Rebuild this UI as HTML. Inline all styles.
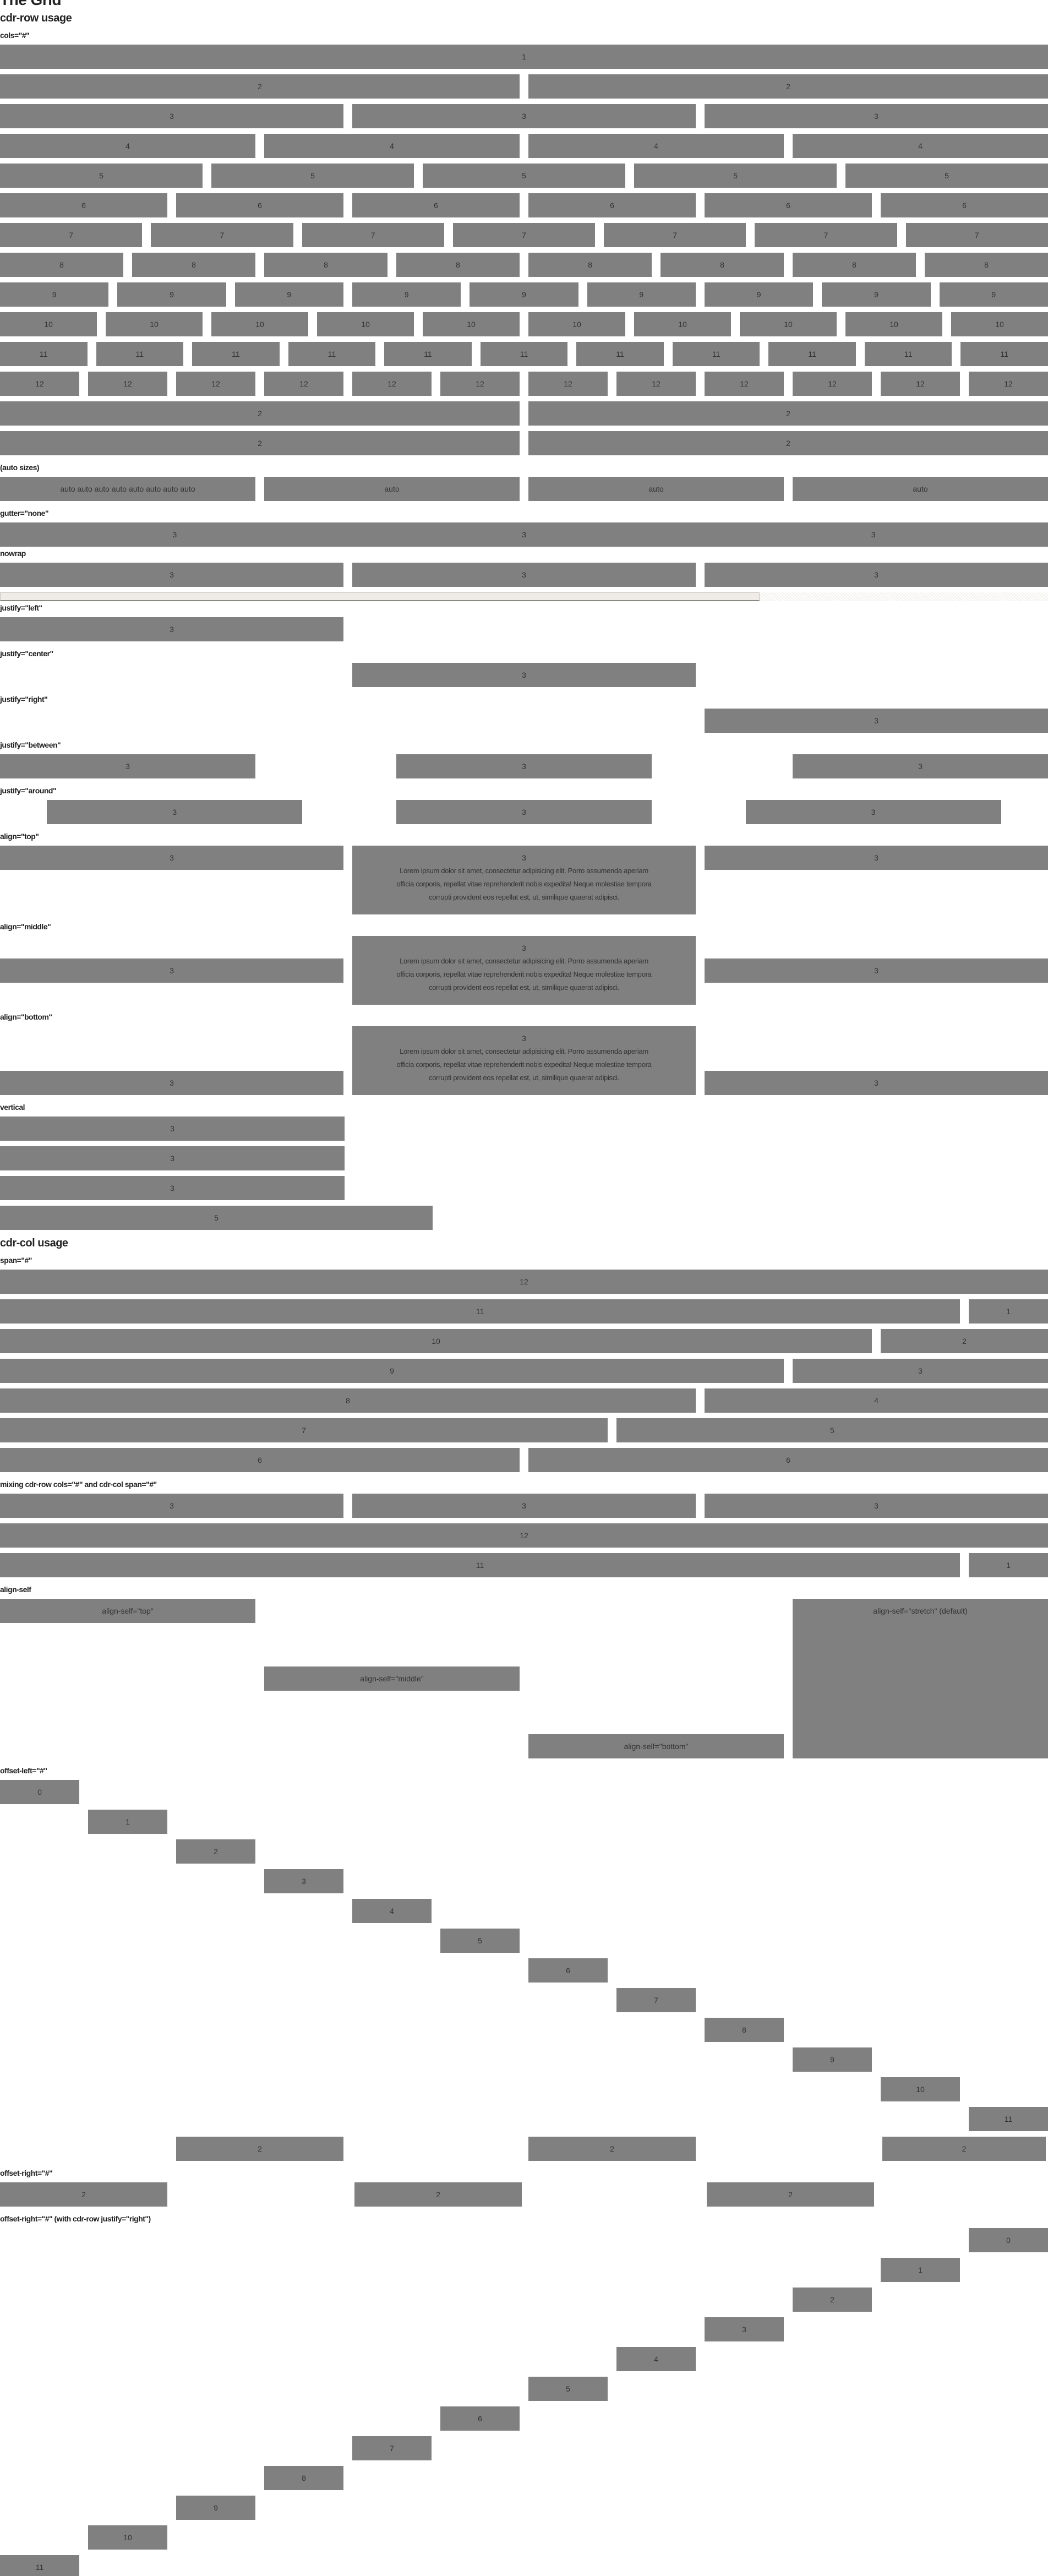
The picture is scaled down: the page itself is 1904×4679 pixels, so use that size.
<!DOCTYPE html>
<html><head><meta charset="utf-8">
<style>
*{box-sizing:border-box;margin:0;padding:0}
html,body{width:1904px;height:4679px;overflow:hidden;background:#fff}
body{font-family:"Liberation Sans",sans-serif;color:#222;position:relative}
.hdr{position:relative;height:52px}
.h1{position:absolute;left:0;top:-16px;font-size:28px;font-weight:bold;line-height:32px;letter-spacing:-0.5px}
.h2{font-size:20px;font-weight:bold;line-height:24px;letter-spacing:-0.5px}
.lab{height:29px;line-height:24px;font-size:14px;font-weight:bold;letter-spacing:-0.5px}
.row{display:flex;margin-bottom:10px;gap:16px}
.row.ng{gap:0;margin-bottom:0}
.b{height:44px;line-height:44px;background:#808080;color:#333;text-align:center;font-size:14px;flex:0 0 auto}
.f{flex:1 1 0}
.tall{height:125px;line-height:24px;padding-top:10px}
.tall div{font-size:13px;white-space:nowrap;letter-spacing:-0.3px}
.scroll{height:16px;margin-bottom:0;background:repeating-linear-gradient(45deg,#f4f2ee 0 2px,#fff 2px 4px);position:relative}
.scroll div{position:absolute;left:0;top:0;width:1380px;height:16px;background:#efebe6;border:1px solid #c8c4bd;border-bottom:2px solid #8a8680}
</style></head><body>
<div class="hdr"><div class="h1">The Grid</div><div class="h2" style="position:absolute;top:21px;left:0">cdr-row usage</div></div>
<div class="lab">cols="#"</div>
<div class="row"><div class="b f">1</div></div>
<div class="row"><div class="b f">2</div><div class="b f">2</div></div>
<div class="row"><div class="b f">3</div><div class="b f">3</div><div class="b f">3</div></div>
<div class="row"><div class="b f">4</div><div class="b f">4</div><div class="b f">4</div><div class="b f">4</div></div>
<div class="row"><div class="b f">5</div><div class="b f">5</div><div class="b f">5</div><div class="b f">5</div><div class="b f">5</div></div>
<div class="row"><div class="b f">6</div><div class="b f">6</div><div class="b f">6</div><div class="b f">6</div><div class="b f">6</div><div class="b f">6</div></div>
<div class="row"><div class="b f">7</div><div class="b f">7</div><div class="b f">7</div><div class="b f">7</div><div class="b f">7</div><div class="b f">7</div><div class="b f">7</div></div>
<div class="row"><div class="b f">8</div><div class="b f">8</div><div class="b f">8</div><div class="b f">8</div><div class="b f">8</div><div class="b f">8</div><div class="b f">8</div><div class="b f">8</div></div>
<div class="row"><div class="b f">9</div><div class="b f">9</div><div class="b f">9</div><div class="b f">9</div><div class="b f">9</div><div class="b f">9</div><div class="b f">9</div><div class="b f">9</div><div class="b f">9</div></div>
<div class="row"><div class="b f">10</div><div class="b f">10</div><div class="b f">10</div><div class="b f">10</div><div class="b f">10</div><div class="b f">10</div><div class="b f">10</div><div class="b f">10</div><div class="b f">10</div><div class="b f">10</div></div>
<div class="row"><div class="b f">11</div><div class="b f">11</div><div class="b f">11</div><div class="b f">11</div><div class="b f">11</div><div class="b f">11</div><div class="b f">11</div><div class="b f">11</div><div class="b f">11</div><div class="b f">11</div><div class="b f">11</div></div>
<div class="row"><div class="b f">12</div><div class="b f">12</div><div class="b f">12</div><div class="b f">12</div><div class="b f">12</div><div class="b f">12</div><div class="b f">12</div><div class="b f">12</div><div class="b f">12</div><div class="b f">12</div><div class="b f">12</div><div class="b f">12</div></div>
<div class="row"><div class="b f">2</div><div class="b f">2</div></div>
<div class="row"><div class="b f">2</div><div class="b f">2</div></div>
<div class="lab">(auto sizes)</div>
<div class="row"><div class="b f">auto auto auto auto auto auto auto auto</div><div class="b f">auto</div><div class="b f">auto</div><div class="b f">auto</div></div>
<div class="lab">gutter="none"</div>
<div class="row ng"><div class="b f">3</div><div class="b f">3</div><div class="b f">3</div></div>
<div class="lab" style="margin-top:0">nowrap</div>
<div class="row"><div class="b f">3</div><div class="b f">3</div><div class="b f">3</div></div>
<div class="scroll"><div></div></div>
<div class="lab">justify="left"</div>
<div class="row"><div class="b" style="width:624px">3</div></div>
<div class="lab">justify="center"</div>
<div class="row" style="justify-content:center"><div class="b" style="width:624px">3</div></div>
<div class="lab">justify="right"</div>
<div class="row" style="justify-content:flex-end"><div class="b" style="width:624px">3</div></div>
<div class="lab">justify="between"</div>
<div class="row" style="justify-content:space-between;gap:0"><div class="b" style="width:464px">3</div><div class="b" style="width:464px">3</div><div class="b" style="width:464px">3</div></div>
<div class="lab">justify="around"</div>
<div class="row" style="justify-content:space-around;gap:0"><div class="b" style="width:464px">3</div><div class="b" style="width:464px">3</div><div class="b" style="width:464px">3</div></div>
<div class="lab">align="top"</div>
<div class="row" style="align-items:flex-start"><div class="b f">3</div><div class="b f tall">3<div>Lorem ipsum dolor sit amet, consectetur adipisicing elit. Porro assumenda aperiam<br>officia corporis, repellat vitae reprehenderit nobis expedita! Neque molestiae tempora<br>corrupti provident eos repellat est, ut, similique quaerat adipisci.</div></div><div class="b f">3</div></div>
<div class="lab">align="middle"</div>
<div class="row" style="align-items:center"><div class="b f">3</div><div class="b f tall">3<div>Lorem ipsum dolor sit amet, consectetur adipisicing elit. Porro assumenda aperiam<br>officia corporis, repellat vitae reprehenderit nobis expedita! Neque molestiae tempora<br>corrupti provident eos repellat est, ut, similique quaerat adipisci.</div></div><div class="b f">3</div></div>
<div class="lab">align="bottom"</div>
<div class="row" style="align-items:flex-end"><div class="b f">3</div><div class="b f tall">3<div>Lorem ipsum dolor sit amet, consectetur adipisicing elit. Porro assumenda aperiam<br>officia corporis, repellat vitae reprehenderit nobis expedita! Neque molestiae tempora<br>corrupti provident eos repellat est, ut, similique quaerat adipisci.</div></div><div class="b f">3</div></div>
<div class="lab">vertical</div>
<div class="row"><div class="b" style="width:626px">3</div></div>
<div class="row"><div class="b" style="width:626px">3</div></div>
<div class="row"><div class="b" style="width:626px">3</div></div>
<div class="row"><div class="b" style="width:786px">5</div></div>
<div class="h2" style="height:33px;line-height:28px">cdr-col usage</div>
<div class="lab">span="#"</div>
<div class="row"><div class="b f">12</div></div>
<div class="row"><div class="b" style="width:1744px">11</div><div class="b f">1</div></div>
<div class="row"><div class="b" style="width:1584px">10</div><div class="b f">2</div></div>
<div class="row"><div class="b" style="width:1424px">9</div><div class="b f">3</div></div>
<div class="row"><div class="b" style="width:1264px">8</div><div class="b f">4</div></div>
<div class="row"><div class="b" style="width:1104px">7</div><div class="b f">5</div></div>
<div class="row"><div class="b f">6</div><div class="b f">6</div></div>
<div class="lab">mixing cdr-row cols="#" and cdr-col span="#"</div>
<div class="row"><div class="b f">3</div><div class="b f">3</div><div class="b f">3</div></div>
<div class="row"><div class="b f">12</div></div>
<div class="row"><div class="b" style="width:1744px">11</div><div class="b f">1</div></div>
<div class="lab">align-self</div>
<div class="row" style="height:290px"><div class="b" style="width:464px;align-self:flex-start">align-self="top"</div><div class="b" style="width:464px;align-self:center">align-self="middle"</div><div class="b" style="width:464px;align-self:flex-end">align-self="bottom"</div><div class="b" style="width:464px;height:290px">align-self="stretch" (default)</div></div>
<div class="lab">offset-left="#"</div>
<div class="row"><div class="b" style="width:144px;margin-left:0">0</div></div>
<div class="row"><div class="b" style="width:144px;margin-left:160px">1</div></div>
<div class="row"><div class="b" style="width:144px;margin-left:320px">2</div></div>
<div class="row"><div class="b" style="width:144px;margin-left:480px">3</div></div>
<div class="row"><div class="b" style="width:144px;margin-left:640px">4</div></div>
<div class="row"><div class="b" style="width:144px;margin-left:800px">5</div></div>
<div class="row"><div class="b" style="width:144px;margin-left:960px">6</div></div>
<div class="row"><div class="b" style="width:144px;margin-left:1120px">7</div></div>
<div class="row"><div class="b" style="width:144px;margin-left:1280px">8</div></div>
<div class="row"><div class="b" style="width:144px;margin-left:1440px">9</div></div>
<div class="row"><div class="b" style="width:144px;margin-left:1600px">10</div></div>
<div class="row"><div class="b" style="width:144px;margin-left:1760px">11</div></div>
<div class="row" style="gap:0"><div class="b" style="width:304px;margin-left:320px">2</div><div class="b" style="width:304px;margin-left:336px">2</div><div class="b" style="width:297px;margin-left:339px">2</div></div>
<div class="lab">offset-right="#"</div>
<div class="row" style="gap:0"><div class="b" style="width:304px">2</div><div class="b" style="width:304px;margin-left:340px">2</div><div class="b" style="width:304px;margin-left:336px">2</div></div>
<div class="lab">offset-right="#" (with cdr-row justify="right")</div>
<div class="row" style="justify-content:flex-end"><div class="b" style="width:144px;margin-right:0">0</div></div>
<div class="row" style="justify-content:flex-end"><div class="b" style="width:144px;margin-right:160px">1</div></div>
<div class="row" style="justify-content:flex-end"><div class="b" style="width:144px;margin-right:320px">2</div></div>
<div class="row" style="justify-content:flex-end"><div class="b" style="width:144px;margin-right:480px">3</div></div>
<div class="row" style="justify-content:flex-end"><div class="b" style="width:144px;margin-right:640px">4</div></div>
<div class="row" style="justify-content:flex-end"><div class="b" style="width:144px;margin-right:800px">5</div></div>
<div class="row" style="justify-content:flex-end"><div class="b" style="width:144px;margin-right:960px">6</div></div>
<div class="row" style="justify-content:flex-end"><div class="b" style="width:144px;margin-right:1120px">7</div></div>
<div class="row" style="justify-content:flex-end"><div class="b" style="width:144px;margin-right:1280px">8</div></div>
<div class="row" style="justify-content:flex-end"><div class="b" style="width:144px;margin-right:1440px">9</div></div>
<div class="row" style="justify-content:flex-end"><div class="b" style="width:144px;margin-right:1600px">10</div></div>
<div class="row" style="justify-content:flex-end"><div class="b" style="width:144px;margin-right:1760px">11</div></div>
</body></html>
